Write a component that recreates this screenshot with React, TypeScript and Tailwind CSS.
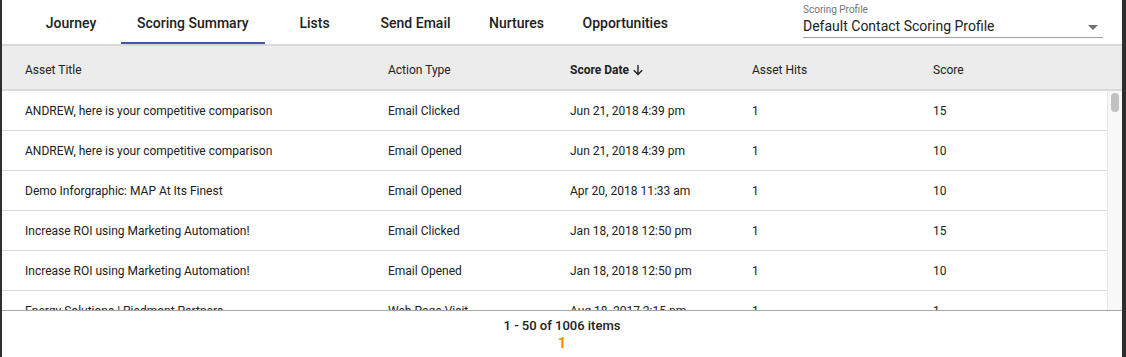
import React from 'react';

const tabs = ['Journey', 'Scoring Summary', 'Lists', 'Send Email', 'Nurtures', 'Opportunities'];

const rows = [
    { title: 'ANDREW, here is your competitive comparison', action: 'Email Clicked', date: 'Jun 21, 2018 4:39 pm', hits: 1, score: 15 },
    { title: 'ANDREW, here is your competitive comparison', action: 'Email Opened', date: 'Jun 21, 2018 4:39 pm', hits: 1, score: 10 },
    { title: 'Demo Inforgraphic: MAP At Its Finest', action: 'Email Opened', date: 'Apr 20, 2018 11:33 am', hits: 1, score: 10 },
    { title: 'Increase ROI using Marketing Automation!', action: 'Email Clicked', date: 'Jan 18, 2018 12:50 pm', hits: 1, score: 15 },
    { title: 'Increase ROI using Marketing Automation!', action: 'Email Opened', date: 'Jan 18, 2018 12:50 pm', hits: 1, score: 10 },
    { title: 'Energy Solutions | Piedmont Partners', action: 'Web Page Visit', date: 'Aug 18, 2017 2:15 pm', hits: 1, score: 1 },
];

const cols = 'grid grid-cols-[363px_182px_182px_181px_1fr] pl-[23px] items-center';

const App = () => {
    const active = 1;

    return (
        <div className="h-[357px] w-[1126px] overflow-hidden bg-white border-l-2 border-r-4 border-[#2e2e2e] flex flex-col text-[#212121]" style={{ fontFamily: 'Roboto, "Liberation Sans", sans-serif' }}>
            {/* tabs + profile select */}
            <div className="flex h-[44px] border-b-2 border-[#d9d9d9] shrink-0 box-content">
                <div className="flex ml-[19px] h-full">
                    {tabs.map((t, i) => (
                        <div key={t} className={`min-w-[100px] px-4 h-full flex items-center justify-center text-[14px] font-medium pt-[2px] ${i === active ? 'border-b-[2px] border-[#3d5a9e] pt-[4px]' : ''}`}>
                            {t}
                        </div>
                    ))}
                </div>
                <div className="ml-auto mr-[19px] w-[300px] mt-[4px] flex flex-col">
                    <span className="text-[10px] leading-[12px] text-[#757575]">Scoring Profile</span>
                    <div className="flex items-center justify-between h-[22px] border-b border-[#9e9e9e] pr-[5px]">
                        <span className="text-[14px] leading-[20px] -mt-[1px]">Default Contact Scoring Profile</span>
                        <svg width="10" height="5" viewBox="0 0 10 5" className="mt-[1px]"><path d="M0 0h10L5 5z" fill="#707070" /></svg>
                    </div>
                </div>
            </div>

            {/* header */}
            <div className={`${cols} h-[45px] pt-[4px] bg-[#ececec] border-b-2 border-[#d9d9d9] text-[12px] shrink-0`}>
                <span>Asset Title</span>
                <span>Action Type</span>
                <span className="font-bold flex items-center gap-[3px]">
                    Score Date
                    <svg width="12" height="12" viewBox="0 0 12 12"><path d="M6 1v9.5M1.8 6.3L6 10.5l4.2-4.2" stroke="#212121" strokeWidth="1.4" fill="none" /></svg>
                </span>
                <span>Asset Hits</span>
                <span>Score</span>
            </div>

            {/* body */}
            <div className="flex h-[219px] overflow-hidden shrink-0">
                <div className="flex-1">
                    {rows.map((r, i) => (
                        <div key={i} className={`${cols} h-[40px] border-b border-[#d9d9d9] text-[12px]`}>
                            <span>{r.title}</span>
                            <span>{r.action}</span>
                            <span>{r.date}</span>
                            <span>{r.hits}</span>
                            <span>{r.score}</span>
                        </div>
                    ))}
                </div>
                <div className="w-[15px] bg-[#f8f8f8] border-l border-[#e6e6e6] pt-[2px] flex justify-center">
                    <div className="w-[8px] h-[19px] rounded-full bg-[#c1c1c1]" />
                </div>
            </div>

            {/* footer */}
            <div className="flex-1 border-t border-[#a8a8a8] flex flex-col items-center pt-[6px]">
                <span className="text-[13px] font-medium leading-[18px]">1 - 50 of 1006 items</span>
                <span className="text-[15px] font-bold leading-[16px] text-[#f28c00]">1</span>
            </div>
        </div>
    );
};

export default App;
